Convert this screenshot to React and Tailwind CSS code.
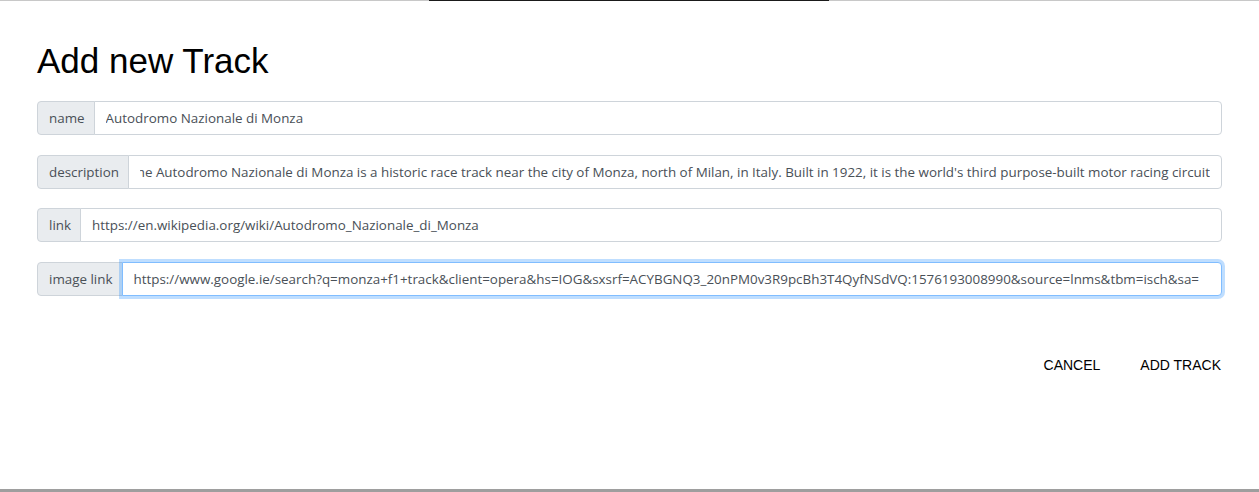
import React from 'react';

const fieldFont = { fontFamily: '"Open Sans", "Noto Sans", sans-serif' };

const Field = ({ label, value, alignEnd, focused }) => (
  <div className="flex h-[34px] w-full text-[13.4px] text-[#495057]" style={fieldFont}>
    <div className="flex items-center pl-[11px] pr-[9px] bg-[#e9ecef] border border-[#ced4da] rounded-l-[4px] whitespace-nowrap">
      {label}
    </div>
    <div
      className={
        'flex-1 min-w-0 flex items-center px-[11px] bg-white border rounded-r-[4px] -ml-px ' +
        (focused
          ? 'border-[#80bdff] shadow-[0_0_0_3px_rgba(0,123,255,0.25)] relative z-10'
          : 'border-[#ced4da]')
      }
    >
      <div className={'flex-1 min-w-0 flex overflow-hidden whitespace-nowrap' + (alignEnd ? ' justify-end' : '')}>
        <span className="shrink-0">{value}</span>
      </div>
    </div>
  </div>
);

const App = () => {
  return (
    <div className="w-full h-[492px] flex flex-col bg-white overflow-hidden">
      {/* backdrop strip */}
      <div className="h-px flex bg-[#c8c8c8]">
        <div className="ml-[429px] w-[400px] bg-[#1a1a1a]" />
      </div>

      <div className="flex-1 flex flex-col px-[37px] pt-[39px]">
        <h2
          className="text-[35px] leading-[41px] text-black mb-[20px]"
          style={{ fontFamily: '"Liberation Sans", Arial, sans-serif' }}
        >
          Add new Track
        </h2>

        <div className="flex flex-col gap-[19.7px]">
          <Field label="name" value="Autodromo Nazionale di Monza" />
          <Field
            label="description"
            alignEnd
            value="The Autodromo Nazionale di Monza is a historic race track near the city of Monza, north of Milan, in Italy. Built in 1922, it is the world's third purpose-built motor racing circuit"
          />
          <Field label="link" value="https://en.wikipedia.org/wiki/Autodromo_Nazionale_di_Monza" />
          <Field
            label="image link"
            focused
            value="https://www.google.ie/search?q=monza+f1+track&client=opera&hs=IOG&sxsrf=ACYBGNQ3_20nPM0v3R9pcBh3T4QyfNSdVQ:1576193008990&source=lnms&tbm=isch&sa="
          />
        </div>

        <div
          className="flex justify-end gap-[40px] mt-[61px] pr-px text-[14px] text-black"
          style={{ fontFamily: '"Liberation Sans", Arial, sans-serif' }}
        >
          <button className="leading-[16px]">CANCEL</button>
          <button className="leading-[16px]">ADD TRACK</button>
        </div>
      </div>

      <div className="h-[3px] bg-[#9e9e9e]" />
    </div>
  );
};

export default App;
